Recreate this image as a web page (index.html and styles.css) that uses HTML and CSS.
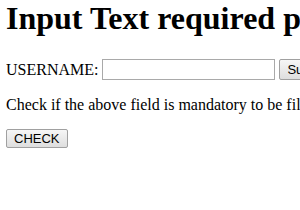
FILE: index.html
```html
<!DOCTYPE html>
<html lang="en">
<head>
    <meta charset="UTF-8">
    <title>Input Text required property</title>
    <link rel="stylesheet" href="styles.css">
</head>
<body>
    <h1>Input Text required property</h1>
    <form class="login">
        <label for="usrname">USERNAME:</label>
        <input type="text" id="usrname" name="usrname" required>
        <input type="submit" value="Submit">
    </form>
    <p>Check if the above field is mandatory to be filled out before submitting the form.</p>
    <button type="button" class="check">CHECK</button>
</body>
</html>
```

FILE: styles.css
```css
body {
    font-family: "Liberation Serif", "Times New Roman", serif;
    font-size: 16px;
    margin: 0 6px;
    width: 900px;
    background: #fff;
    color: #000;
}
h1 {
    font-size: 32px;
    margin: 0 0 22px;
    white-space: nowrap;
}
.login {
    display: flex;
    align-items: center;
    gap: 4px;
}
.login input[type="text"] {
    box-sizing: border-box;
    width: 173px;
    height: 21px;
    padding: 1px 2px;
    border: 1px solid #a9a9a9;
    font-size: 13px;
}
.login input[type="submit"], .check {
    font-family: "Liberation Sans", Arial, sans-serif;
    font-size: 13px;
    line-height: 15px;
    padding: 1px 7px;
    border: 1px solid #a0a0a0;
    border-radius: 2px;
    background: linear-gradient(#f6f6f6, #dedede);
    color: #000;
}
.login input[type="submit"] { padding: 2px 7px; }
p { margin: 16px 0 15px; white-space: nowrap; }
```
